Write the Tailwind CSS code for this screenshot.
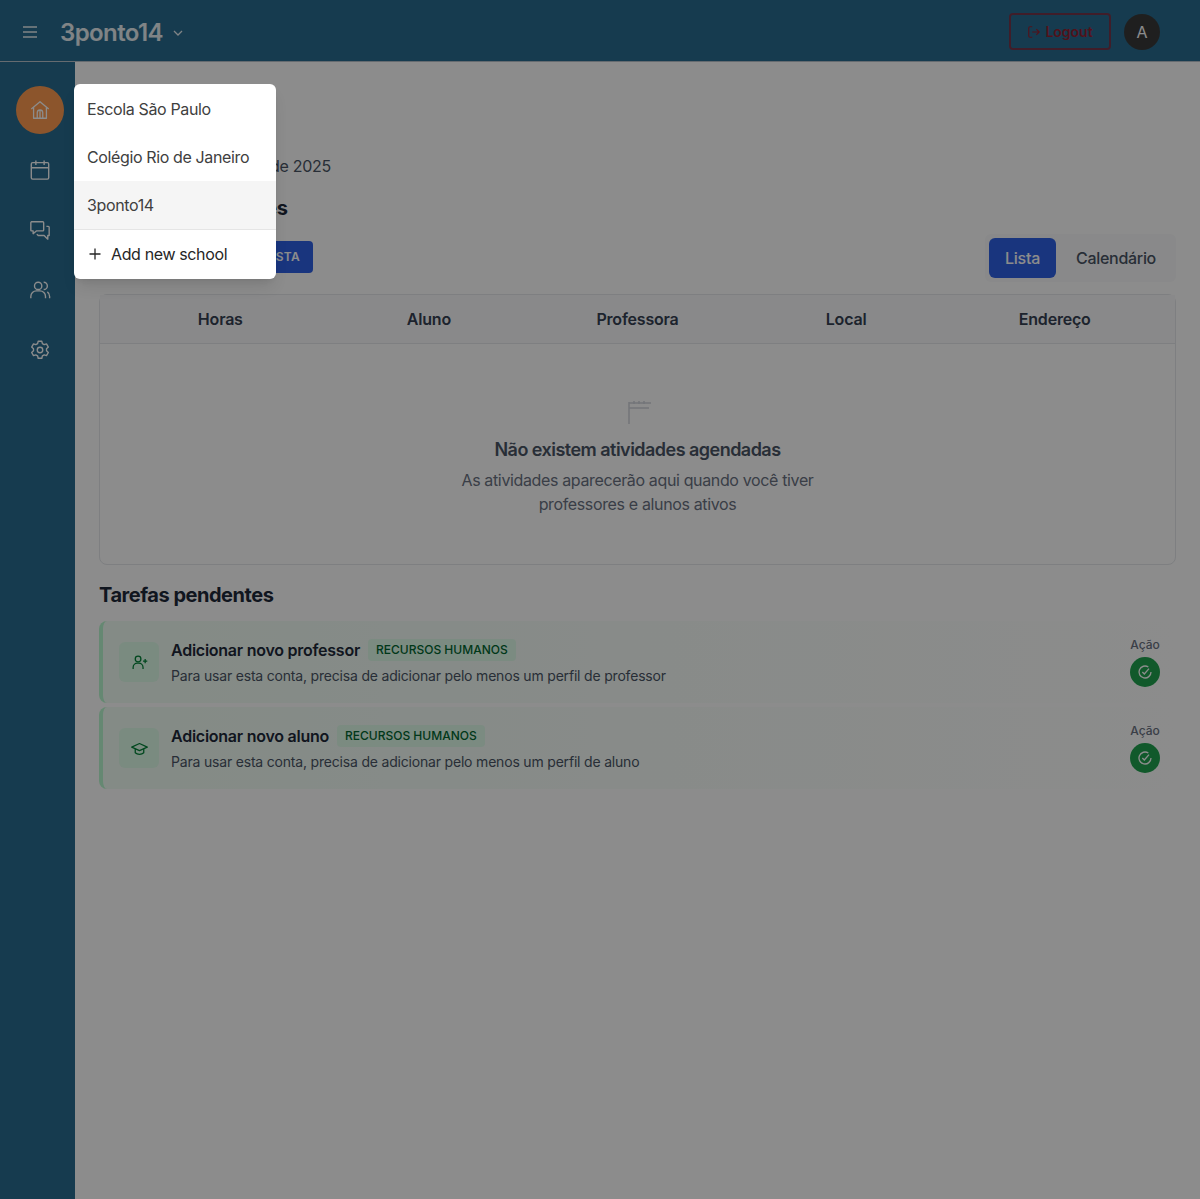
<!DOCTYPE html>
<html lang="en">
<head>
  <meta charset="UTF-8" />
  <title>3ponto14</title>
  <script src="https://cdn.jsdelivr.net/npm/@tailwindcss/browser@4"></script>
</head>
<body class="bg-white text-gray-900 font-['Inter',sans-serif]">
<div class="relative h-[1199px] w-[1200px] overflow-hidden">

  <!-- HEADER -->
  <header class="flex h-[62px] items-center justify-between border-b border-[#b9c4cc] bg-[#286c90] pl-[22px] pr-[40px] pt-0.5">
    <div class="flex items-center">
      <svg class="h-4 w-4 text-white/90" viewBox="0 0 16 16" fill="none" stroke="currentColor" stroke-width="1.3"><path d="M1 3h14M1 8h14M1 13h14"/></svg>
      <span class="ml-[22px] mt-[3px] text-2xl font-semibold tracking-[-0.6px] text-white/90">3ponto14</span>
      <svg class="ml-[9px] mt-[3px] h-3 w-3 text-white/90" viewBox="0 0 12 12" fill="none" stroke="currentColor" stroke-width="1.3"><path d="M2 4l4 4 4-4"/></svg>
    </div>
    <div class="flex items-center gap-[13px]">
      <div class="flex h-[37px] w-[102px] items-center justify-center gap-1 rounded-sm border-2 border-red-700/50 text-sm font-semibold text-red-700/70">
        <svg class="h-3.5 w-3.5" viewBox="0 0 24 24" fill="none" stroke="currentColor" stroke-width="2"><path d="M9 21H5a2 2 0 0 1-2-2V5a2 2 0 0 1 2-2h4M16 17l5-5-5-5M21 12H9"/></svg>
        Logout
      </div>
      <div class="flex h-9 w-9 items-center justify-center rounded-full bg-[#3a3a3a] text-white">A</div>
    </div>
  </header>

  <div class="flex h-[1137px]">
    <!-- SIDEBAR -->
    <aside class="flex w-[75px] shrink-0 flex-col items-center bg-[#286c90] pl-[5px] pt-6 text-white">
      <div class="flex h-12 w-12 items-center justify-center rounded-full bg-[#ff9c50]">
        <svg class="h-[22px] w-[22px]" viewBox="0 0 24 24" fill="none" stroke="currentColor" stroke-width="1.4" stroke-linejoin="round"><path d="M2.500 11 12 3l9.500 8"/><path d="M5 9v12h14V9"/><path d="M9 21v-6a3 3 0 0 1 6 0v6M12 12v9"/></svg>
      </div>
      <div class="mt-[18px] flex h-9 w-9 items-center justify-center">
        <svg class="h-[22px] w-[22px]" viewBox="0 0 24 24" fill="none" stroke="currentColor" stroke-width="1.5"><rect x="2.500" y="4" width="19" height="18" rx="1.500"/><path d="M2.500 9.500h19M7.500 1.500v5M16.500 1.500v5"/></svg>
      </div>
      <div class="mt-6 flex h-9 w-9 items-center justify-center">
        <svg class="h-[22px] w-[22px]" viewBox="0 0 24 24" fill="none" stroke="currentColor" stroke-width="1.5" stroke-linejoin="round"><path d="M2.500 3h12.500a1 1 0 0 1 1 1v8a1 1 0 0 1-1 1H8l-3.500 3v-3H2.500a1 1 0 0 1-.5-1V4z"/><path d="M19 8h2a1 1 0 0 1 1 1v9h-1.500v4l-4-4H10l-1.500-1.500"/></svg>
      </div>
      <div class="mt-6 flex h-9 w-9 items-center justify-center">
        <svg class="h-[22px] w-[22px]" viewBox="0 0 24 24" fill="none" stroke="currentColor" stroke-width="1.5"><circle cx="10" cy="7.500" r="4"/><path d="M2 21v-2a6 6 0 0 1 6-6h4a6 6 0 0 1 6 6v2M16 3.500a4 4 0 0 1 0 8M20 14a6 6 0 0 1 2.500 5v2"/></svg>
      </div>
      <div class="mt-6 flex h-9 w-9 items-center justify-center">
        <svg class="h-[22px] w-[22px]" viewBox="0 0 24 24" fill="none" stroke="currentColor" stroke-width="1.5" stroke-linejoin="round"><path d="M10 2.500h4l.6 2.600 2 1.100 2.500-.8 2 3.400-2 1.800v2.300l2 1.800-2 3.400-2.500-.8-2 1.100-.6 2.600h-4l-.6-2.600-2-1.100-2.500.8-2-3.400 2-1.800v-2.300l-2-1.800 2-3.400 2.500.8 2-1.100z"/><circle cx="12" cy="12" r="3"/></svg>
      </div>
    </aside>

    <!-- MAIN -->
    <main class="flex-1 bg-white pl-6 pr-6 pt-[33px]">
      <h1 class="text-[28.5px] font-bold leading-9 text-gray-800">Painel inicial</h1>
      <p class="mt-[23px] leading-6 tracking-[-0.3px] text-gray-600">Segunda, 6 de outubro de 2025</p>
      <h2 class="mt-[18px] text-xl font-bold leading-6 tracking-[-0.45px] text-gray-800">Próximas atividades</h2>

      <div class="mt-3.5 flex items-start justify-between">
        <div class="mt-[7px] flex h-8 w-[214px] items-center justify-end rounded-sm bg-[#2f62e6] pr-[13px] text-xs font-semibold tracking-[0.3px] text-white">VER LISTA</div>
        <div class="flex gap-1 rounded-md bg-gray-50 p-1">
          <div class="flex h-10 w-[67px] items-center justify-center rounded-md bg-[#2f62e6] font-medium tracking-[-0.2px] text-white">Lista</div>
          <div class="flex h-10 items-center pl-4 pr-4 font-medium tracking-[-0.3px] text-gray-600">Calendário</div>
        </div>
      </div>

      <!-- TABLE -->
      <section class="mt-3 h-[271px] rounded-lg border border-gray-200 bg-white">
        <div class="grid h-[49px] grid-cols-5 items-center border-b border-gray-200 bg-gray-50 px-4 text-center font-semibold tracking-[-0.2px] text-gray-700">
          <div>Horas</div>
          <div>Aluno</div>
          <div>Professora</div>
          <div>Local</div>
          <div>Endereço</div>
        </div>
        <div class="flex flex-col items-center pt-[56px]">
          <svg class="ml-1 h-6 w-6 text-gray-300" viewBox="0 0 24 24" fill="none" stroke="currentColor" stroke-width="1.500"><path d="M1 2v22M1 3h22M1 8h20"/><path d="M6 1v3M11 1v3M16 1v3"/></svg>
          <h3 class="mt-3 text-lg font-semibold leading-7 tracking-[-0.53px] text-gray-600">Não existem atividades agendadas</h3>
          <p class="mt-1 w-[380px] text-center leading-6 tracking-[-0.36px] text-gray-500">As atividades aparecerão aqui quando você tiver professores e alunos ativos</p>
        </div>
      </section>

      <h2 class="mt-4 text-xl font-bold leading-7 tracking-[-0.47px] text-gray-800">Tarefas pendentes</h2>

      <!-- TASKS -->
      <div class="mt-3 flex flex-col gap-1">
        <article class="flex h-[82px] items-center justify-between rounded-lg border-l-4 border-green-200 bg-linear-to-r from-green-50 to-white pl-4 pr-4">
          <div class="flex items-center gap-3">
            <div class="flex h-10 w-10 items-center justify-center rounded-md bg-green-100/80 text-green-700">
              <svg class="h-[17px] w-[17px]" viewBox="0 0 24 24" fill="none" stroke="currentColor" stroke-width="1.8"><circle cx="10" cy="7" r="4"/><path d="M3 21v-2a6 6 0 0 1 6-6h2a6 6 0 0 1 6 6v2M20 7v6M17 10h6"/></svg>
            </div>
            <div>
              <div class="flex items-center gap-2">
                <span class="font-semibold leading-6 tracking-[-0.25px] text-gray-800">Adicionar novo professor</span>
                <span class="rounded bg-green-100/80 px-2 py-0.5 text-xs font-medium leading-[18px] text-green-800">RECURSOS HUMANOS</span>
              </div>
              <p class="mt-1 text-sm leading-5 tracking-[-0.19px] text-gray-600">Para usar esta conta, precisa de adicionar pelo menos um perfil de professor</p>
            </div>
          </div>
          <div class="flex flex-col items-center">
            <span class="text-xs font-medium leading-4 text-gray-500">Ação</span>
            <div class="mt-1 flex h-[30px] w-[30px] items-center justify-center rounded-full bg-[#1fa34f] text-white">
              <svg class="h-4 w-4" viewBox="0 0 24 24" fill="none" stroke="currentColor" stroke-width="2"><path d="M21 12a9 9 0 1 1-4-7.500"/><path d="m8 12 3 3 7-8"/></svg>
            </div>
          </div>
        </article>

        <article class="flex h-[82px] items-center justify-between rounded-lg border-l-4 border-green-200 bg-linear-to-r from-green-50 to-white pl-4 pr-4">
          <div class="flex items-center gap-3">
            <div class="flex h-10 w-10 items-center justify-center rounded-md bg-green-100/80 text-green-700">
              <svg class="h-[17px] w-[17px]" viewBox="0 0 24 24" fill="none" stroke="currentColor" stroke-width="1.8" stroke-linejoin="round"><path d="M12 5 1 10l11 5 11-5z"/><path d="M6 12.500V18c3 3 9 3 12 0v-5.500"/></svg>
            </div>
            <div>
              <div class="flex items-center gap-2">
                <span class="font-semibold leading-6 tracking-[-0.25px] text-gray-800">Adicionar novo aluno</span>
                <span class="rounded bg-green-100/80 px-2 py-0.5 text-xs font-medium leading-[18px] text-green-800">RECURSOS HUMANOS</span>
              </div>
              <p class="mt-1 text-sm leading-5 tracking-[-0.19px] text-gray-600">Para usar esta conta, precisa de adicionar pelo menos um perfil de aluno</p>
            </div>
          </div>
          <div class="flex flex-col items-center">
            <span class="text-xs font-medium leading-4 text-gray-500">Ação</span>
            <div class="mt-1 flex h-[30px] w-[30px] items-center justify-center rounded-full bg-[#1fa34f] text-white">
              <svg class="h-4 w-4" viewBox="0 0 24 24" fill="none" stroke="currentColor" stroke-width="2"><path d="M21 12a9 9 0 1 1-4-7.500"/><path d="m8 12 3 3 7-8"/></svg>
            </div>
          </div>
        </article>
      </div>
    </main>
  </div>

  <!-- OVERLAY -->
  <div class="absolute inset-0 bg-black/45"></div>

  <!-- SCHOOL MENU -->
  <div class="absolute left-[74px] top-[84px] w-[202px] overflow-hidden rounded-md bg-white py-px tracking-[-0.37px] text-neutral-700 shadow-lg">
    <div class="flex h-12 items-center px-[13px]">Escola São Paulo</div>
    <div class="flex h-12 items-center px-[13px]">Colégio Rio de Janeiro</div>
    <div class="flex h-12 items-center bg-neutral-100 px-[13px]">3ponto14</div>
    <div class="flex h-[49px] items-center gap-2 border-t border-neutral-200 px-[13px] text-neutral-800">
      <svg class="h-4 w-4" viewBox="0 0 16 16" fill="none" stroke="currentColor" stroke-width="1.3"><path d="M8 2.500v11M2.500 8h11"/></svg>
      Add new school
    </div>
  </div>
</div>
</body>
</html>
